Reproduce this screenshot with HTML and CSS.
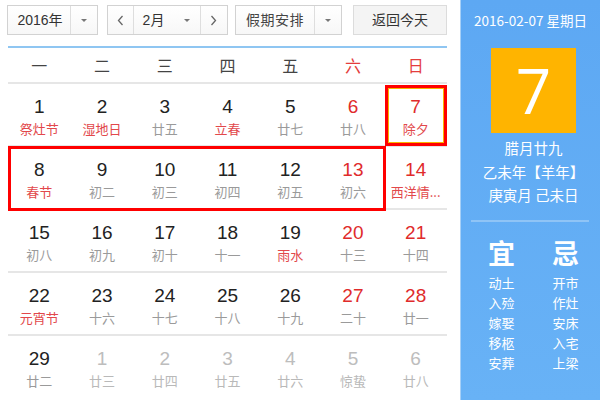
FILE: index.html
```html
<!DOCTYPE html>
<html lang="zh">
<head>
<meta charset="utf-8">
<link rel="stylesheet" href="styles.css">
</head>
<body>
<div class="app">
  <div class="main">
    <div class="toolbar">
      <div class="sel sel-year">
        <span class="sel-text">2016年</span>
        <span class="sel-caret"><svg width="8" height="5" viewBox="0 0 8 5"><path d="M1 1 L4 4 L7 1 Z" fill="#777"/></svg></span>
      </div>
      <div class="sel sel-month">
        <span class="arrow"><svg width="7" height="11" viewBox="0 0 7 11"><path d="M5.5 1 L1.5 5.5 L5.5 10" fill="none" stroke="#666" stroke-width="1.3"/></svg></span>
        <span class="sel-text month-text">2月</span>
        <span class="sel-caret caret-month"><svg width="8" height="5" viewBox="0 0 8 5"><path d="M1 1 L4 4 L7 1 Z" fill="#777"/></svg></span>
        <span class="arrow arrow-r"><svg width="7" height="11" viewBox="0 0 7 11"><path d="M1.5 1 L5.5 5.5 L1.5 10" fill="none" stroke="#666" stroke-width="1.3"/></svg></span>
      </div>
      <div class="sel sel-holiday">
        <span class="sel-text holiday-text">假期安排</span>
        <span class="sel-caret"><svg width="8" height="5" viewBox="0 0 8 5"><path d="M1 1 L4 4 L7 1 Z" fill="#777"/></svg></span>
      </div>
      <div class="btn-today">返回今天</div>
    </div>
    <div class="calendar">
      <div class="weekdays">
        <span>一</span><span>二</span><span>三</span><span>四</span><span>五</span><span class="wk">六</span><span class="wk">日</span>
      </div>
      <div class="grid">
        <div class="row">
          <div class="cell"><span class="num">1</span><span class="lunar fest">祭灶节</span></div>
          <div class="cell"><span class="num">2</span><span class="lunar fest">湿地日</span></div>
          <div class="cell"><span class="num">3</span><span class="lunar">廿五</span></div>
          <div class="cell"><span class="num">4</span><span class="lunar fest">立春</span></div>
          <div class="cell"><span class="num">5</span><span class="lunar">廿七</span></div>
          <div class="cell red"><span class="num">6</span><span class="lunar">廿八</span></div>
          <div class="cell red"><span class="num">7</span><span class="lunar fest">除夕</span></div>
        </div>
        <div class="row">
          <div class="cell"><span class="num">8</span><span class="lunar fest">春节</span></div>
          <div class="cell"><span class="num">9</span><span class="lunar">初二</span></div>
          <div class="cell"><span class="num">10</span><span class="lunar">初三</span></div>
          <div class="cell"><span class="num">11</span><span class="lunar">初四</span></div>
          <div class="cell"><span class="num">12</span><span class="lunar">初五</span></div>
          <div class="cell red"><span class="num">13</span><span class="lunar">初六</span></div>
          <div class="cell red"><span class="num">14</span><span class="lunar fest">西洋情...</span></div>
        </div>
        <div class="row">
          <div class="cell"><span class="num">15</span><span class="lunar">初八</span></div>
          <div class="cell"><span class="num">16</span><span class="lunar">初九</span></div>
          <div class="cell"><span class="num">17</span><span class="lunar">初十</span></div>
          <div class="cell"><span class="num">18</span><span class="lunar">十一</span></div>
          <div class="cell"><span class="num">19</span><span class="lunar fest">雨水</span></div>
          <div class="cell red"><span class="num">20</span><span class="lunar">十三</span></div>
          <div class="cell red"><span class="num">21</span><span class="lunar">十四</span></div>
        </div>
        <div class="row">
          <div class="cell"><span class="num">22</span><span class="lunar fest">元宵节</span></div>
          <div class="cell"><span class="num">23</span><span class="lunar">十六</span></div>
          <div class="cell"><span class="num">24</span><span class="lunar">十七</span></div>
          <div class="cell"><span class="num">25</span><span class="lunar">十八</span></div>
          <div class="cell"><span class="num">26</span><span class="lunar">十九</span></div>
          <div class="cell red"><span class="num">27</span><span class="lunar">二十</span></div>
          <div class="cell red"><span class="num">28</span><span class="lunar">廿一</span></div>
        </div>
        <div class="row last">
          <div class="cell"><span class="num">29</span><span class="lunar">廿二</span></div>
          <div class="cell other"><span class="num">1</span><span class="lunar">廿三</span></div>
          <div class="cell other"><span class="num">2</span><span class="lunar">廿四</span></div>
          <div class="cell other"><span class="num">3</span><span class="lunar">廿五</span></div>
          <div class="cell other"><span class="num">4</span><span class="lunar">廿六</span></div>
          <div class="cell other"><span class="num">5</span><span class="lunar">惊蛰</span></div>
          <div class="cell other"><span class="num">6</span><span class="lunar">廿八</span></div>
        </div>
        <div class="mark mark-today"></div>
        <div class="mark mark-week"></div>
      </div>
    </div>
  </div>
  <div class="side">
    <div class="side-date">2016-02-07 星期日</div>
    <div class="big-day">7</div>
    <div class="side-lunar">
      <div>腊月廿九</div>
      <div>乙未年【羊年】</div>
      <div>庚寅月 己未日</div>
    </div>
    <div class="side-sep"></div>
    <div class="yiji">
      <div class="yj-col">
        <div class="yj-title">宜</div>
        <div class="yj-item">动土</div>
        <div class="yj-item">入殓</div>
        <div class="yj-item">嫁娶</div>
        <div class="yj-item">移柩</div>
        <div class="yj-item">安葬</div>
      </div>
      <div class="yj-col">
        <div class="yj-title">忌</div>
        <div class="yj-item">开市</div>
        <div class="yj-item">作灶</div>
        <div class="yj-item">安床</div>
        <div class="yj-item">入宅</div>
        <div class="yj-item">上梁</div>
      </div>
    </div>
  </div>
</div>
</body>
</html>
```

FILE: styles.css
```css
html, body {
  margin: 0;
  padding: 0;
  background: #fff;
}
body {
  font-family: "Liberation Sans", "Noto Sans CJK SC", sans-serif;
  color: #333;
  width: 600px;
  height: 400px;
  overflow: hidden;
}
.app {
  display: flex;
  width: 600px;
  height: 400px;
}
.main {
  width: 460px;
  flex: none;
}
.toolbar {
  display: flex;
  align-items: stretch;
  height: 30px;
  margin-top: 5px;
  padding-left: 7px;
}
.sel {
  display: flex;
  align-items: center;
  box-sizing: border-box;
  height: 30px;
  border: 1px solid #d2d2d2;
  background: linear-gradient(#ffffff, #f7f7f7);
  font-size: 14px;
  color: #333;
}
.sel-year { width: 91px; }
.sel-month { width: 121px; margin-left: 9px; }
.sel-holiday { width: 107px; margin-left: 7px; }
.sel-text {
  flex: 1;
  text-align: center;
  line-height: 28px;
}
.sel-year .sel-text { padding-left: 2px; }
.sel-caret {
  display: flex;
  align-items: center;
  justify-content: center;
  width: 26px;
  height: 100%;
  border-left: 1px solid #dedede;
}
.holiday-text { color: #444; letter-spacing: 0.5px; }
.arrow {
  display: flex;
  align-items: center;
  justify-content: center;
  width: 25px;
  height: 100%;
  border-right: 1px solid #dedede;
}
.arrow-r {
  border-right: none;
  border-left: 1px solid #dedede;
  width: 27px;
}
.month-text {
  flex: none;
  width: 40px;
  text-align: center;
}
.caret-month {
  border-left: none;
  width: 26px;
  flex: none;
}
.btn-today {
  box-sizing: border-box;
  width: 94px;
  height: 30px;
  margin-left: 11px;
  border: 1px solid #dcdcdc;
  background: #f4f4f4;
  font-size: 14px;
  line-height: 28px;
  text-align: center;
  color: #333;
}
.calendar {
  margin-left: 8px;
  width: 439px;
  margin-top: 11px;
  border-top: 2px solid #8fc6f2;
}
.weekdays {
  display: grid;
  grid-template-columns: repeat(7, 1fr);
  height: 34px;
  border-bottom: 2px solid #e6e6e6;
  font-family: "Noto Sans CJK SC", sans-serif;
  font-size: 16px;
  line-height: 34px;
  color: #444;
  text-align: center;
}
.weekdays .wk { color: #e43d3d; }
.grid {
  position: relative;
}
.row {
  display: grid;
  grid-template-columns: repeat(7, 1fr);
  height: 61px;
  border-bottom: 2px solid #e6e6e6;
}
.row.last { border-bottom: none; }
.cell {
  display: flex;
  flex-direction: column;
  align-items: center;
  padding-top: 12px;
}
.num {
  font-size: 19px;
  line-height: 22px;
  color: #222;
}
.lunar {
  font-family: "Noto Sans CJK SC", sans-serif;
  font-size: 13px;
  line-height: 18px;
  margin-top: 2px;
  color: #9a9a9a;
  white-space: nowrap;
}
.lunar.fest { color: #e2484b; }
.cell.red .num { color: #e02b2b; }
.cell.other .num { color: #bdbdbd; }
.cell.other .lunar { color: #b9b9b9; }
.mark {
  position: absolute;
  box-sizing: border-box;
  pointer-events: none;
}
.mark-today {
  left: 377px;
  top: 1px;
  width: 62px;
  height: 61px;
  border: 3px solid #f00;
  box-shadow: inset 0 0 0 1px #f7b500;
}
.mark-week {
  left: 0;
  top: 62px;
  width: 378px;
  height: 65px;
  border: 3px solid #f00;
}
.side {
  flex: 1;
  background: linear-gradient(#5da8f3, #68b2f6);
  border-left: 1px solid #a7d0f7;
  color: #fff;
  font-family: "Noto Sans CJK SC", sans-serif;
  text-align: center;
}
.side-date {
  margin-top: 11px;
  font-size: 13.5px;
  line-height: 18px;
}
.big-day {
  width: 85px;
  height: 85px;
  margin: 19px 0 0 30px;
  background: #ffb400;
  font-family: "Open Sans", "Liberation Sans", sans-serif;
  font-weight: 400;
  font-size: 62px;
  line-height: 85px;
  color: #fff;
}
.side-lunar {
  margin-top: 3px;
  font-size: 14.5px;
  line-height: 23.5px;
  padding-left: 6px;
}
.side-sep {
  height: 2px;
  margin: 13px 11px 0 10px;
  background: #8fc4f6;
}
.yiji {
  display: flex;
  justify-content: center;
  gap: 6px;
  padding-left: 6px;
}
.yj-col {
  width: 58px;
}
.yj-title {
  font-size: 27px;
  font-weight: bold;
  line-height: 34px;
  margin-top: 14px;
  margin-bottom: 3px;
}
.yj-item {
  font-size: 13px;
  line-height: 20px;
}
```
